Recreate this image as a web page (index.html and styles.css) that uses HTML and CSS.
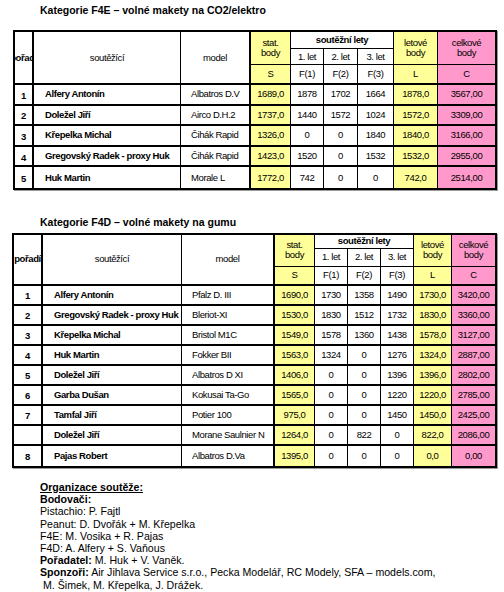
FILE: index.html
```html
<!DOCTYPE html>
<html lang="cs">
<head>
  <meta charset="UTF-8">
  <title>Výsledky – F4E a F4D</title>
  <link rel="stylesheet" href="styles.css">
</head>
<body>
  <!-- F4E -->
  <h1 class="title">Kategorie F4E – volné makety na CO2/elektro</h1>
  <table class="results f4e">
    <colgroup>
      <col style="width:19px"><col style="width:147px"><col style="width:70px">
      <col style="width:40px"><col style="width:33px"><col style="width:34px"><col style="width:36px">
      <col style="width:44px"><col style="width:57px">
    </colgroup>
    <thead>
      <tr class="ha">
        <th rowspan="3" class="rank"><div class="clip"><span>pořadí</span></div></th>
        <th rowspan="3" class="name-h">soutěžící</th>
        <th rowspan="3" class="model-h">model</th>
        <th rowspan="2" class="yellow">stat.<br>body</th>
        <th colspan="3" class="group">soutěžní lety</th>
        <th rowspan="2" class="yellow">letové<br>body</th>
        <th rowspan="2" class="pink last">celkové<br>body</th>
      </tr>
      <tr class="hb">
        <th>1. let</th><th>2. let</th><th>3. let</th>
      </tr>
      <tr class="hc">
        <th class="yellow nt">S</th><th>F(1)</th><th>F(2)</th><th>F(3)</th>
        <th class="yellow nt">L</th><th class="pink nt last">C</th>
      </tr>
    </thead>
    <tbody>
      <tr><td class="rank">1</td><td class="name">Alfery Antonín</td><td class="model">Albatros D.V</td><td class="yellow">1689,0</td><td>1878</td><td>1702</td><td>1664</td><td class="yellow">1878,0</td><td class="pink last">3567,00</td></tr>
      <tr><td class="rank">2</td><td class="name">Doležel Jiří</td><td class="model">Airco D.H.2</td><td class="yellow">1737,0</td><td>1440</td><td>1572</td><td>1024</td><td class="yellow">1572,0</td><td class="pink last">3309,00</td></tr>
      <tr><td class="rank">3</td><td class="name">Křepelka Michal</td><td class="model">Čihák Rapid</td><td class="yellow">1326,0</td><td>0</td><td>0</td><td>1840</td><td class="yellow">1840,0</td><td class="pink last">3166,00</td></tr>
      <tr><td class="rank">4</td><td class="name">Gregovský Radek - proxy Huk</td><td class="model">Čihák Rapid</td><td class="yellow">1423,0</td><td>1520</td><td>0</td><td>1532</td><td class="yellow">1532,0</td><td class="pink last">2955,00</td></tr>
      <tr><td class="rank">5</td><td class="name">Huk Martin</td><td class="model">Morale L</td><td class="yellow">1772,0</td><td>742</td><td>0</td><td>0</td><td class="yellow">742,0</td><td class="pink last">2514,00</td></tr>
    </tbody>
  </table>

  <!-- F4D -->
  <h1 class="title second">Kategorie F4D – volné makety na gumu</h1>
  <table class="results f4d">
    <colgroup>
      <col style="width:29px"><col style="width:139px"><col style="width:93px">
      <col style="width:40px"><col style="width:33px"><col style="width:33px"><col style="width:33px">
      <col style="width:38px"><col style="width:43px">
    </colgroup>
    <thead>
      <tr class="ha">
        <th rowspan="3" class="rank bold">pořadí</th>
        <th rowspan="3" class="name-h">soutěžící</th>
        <th rowspan="3" class="model-h">model</th>
        <th rowspan="2" class="yellow">stat.<br>body</th>
        <th colspan="3" class="group">soutěžní lety</th>
        <th rowspan="2" class="yellow">letové<br>body</th>
        <th rowspan="2" class="pink last">celkové<br>body</th>
      </tr>
      <tr class="hb">
        <th>1. let</th><th>2. let</th><th>3. let</th>
      </tr>
      <tr class="hc">
        <th class="yellow nt">S</th><th>F(1)</th><th>F(2)</th><th>F(3)</th>
        <th class="yellow nt">L</th><th class="pink nt last">C</th>
      </tr>
    </thead>
    <tbody>
      <tr><td class="rank">1</td><td class="name">Alfery Antonín</td><td class="model">Pfalz D. III</td><td class="yellow">1690,0</td><td>1730</td><td>1358</td><td>1490</td><td class="yellow">1730,0</td><td class="pink last">3420,00</td></tr>
      <tr><td class="rank">2</td><td class="name">Gregovský Radek - proxy Huk</td><td class="model">Bleriot-XI</td><td class="yellow">1530,0</td><td>1830</td><td>1512</td><td>1732</td><td class="yellow">1830,0</td><td class="pink last">3360,00</td></tr>
      <tr><td class="rank">3</td><td class="name">Křepelka Michal</td><td class="model">Bristol M1C</td><td class="yellow">1549,0</td><td>1578</td><td>1360</td><td>1438</td><td class="yellow">1578,0</td><td class="pink last">3127,00</td></tr>
      <tr><td class="rank">4</td><td class="name">Huk Martin</td><td class="model">Fokker BII</td><td class="yellow">1563,0</td><td>1324</td><td>0</td><td>1276</td><td class="yellow">1324,0</td><td class="pink last">2887,00</td></tr>
      <tr><td class="rank">5</td><td class="name">Doležel Jiří</td><td class="model">Albatros D XI</td><td class="yellow">1406,0</td><td>0</td><td>0</td><td>1396</td><td class="yellow">1396,0</td><td class="pink last">2802,00</td></tr>
      <tr><td class="rank">6</td><td class="name">Garba Dušan</td><td class="model">Kokusai Ta-Go</td><td class="yellow">1565,0</td><td>0</td><td>0</td><td>1220</td><td class="yellow">1220,0</td><td class="pink last">2785,00</td></tr>
      <tr><td class="rank">7</td><td class="name">Tamfal Jiří</td><td class="model">Potier 100</td><td class="yellow">975,0</td><td>0</td><td>0</td><td>1450</td><td class="yellow">1450,0</td><td class="pink last">2425,00</td></tr>
      <tr><td class="rank"></td><td class="name">Doležel Jiří</td><td class="model">Morane Saulnier N</td><td class="yellow">1264,0</td><td>0</td><td>822</td><td>0</td><td class="yellow">822,0</td><td class="pink last">2086,00</td></tr>
      <tr><td class="rank">8</td><td class="name">Pajas Robert</td><td class="model">Albatros D.Va</td><td class="yellow">1395,0</td><td>0</td><td>0</td><td>0</td><td class="yellow">0,0</td><td class="pink last">0,00</td></tr>
    </tbody>
  </table>

  <!-- Organizace -->
  <div class="org">
    <p class="b u">Organizace soutěže: </p>
    <p class="b">Bodovači:</p>
    <p>Pistachio: P. Fajtl</p>
    <p>Peanut: D. Dvořák + M. Křepelka</p>
    <p>F4E: M. Vosika + R. Pajas</p>
    <p>F4D: A. Alfery + S. Vaňous</p>
    <p><b>Pořadatel:</b> M. Huk + V. Vaněk.</p>
    <p><b>Sponzoři:</b> Air Jihlava Service s.r.o., Pecka Modelář, RC Modely, SFA – models.com,</p>
    <p class="indent">M. Šimek, M. Křepelka, J. Drážek.</p>
  </div>
</body>
</html>
```

FILE: styles.css
```css
/* ZÁKLAD */
* {
  margin: 0;
  padding: 0;
  box-sizing: border-box;
}
body {
  background: #fff;
  color: #000;
  font-family: "Liberation Sans", Arial, sans-serif;
  padding-top: 3px;
}

/* Nadpisy kategorií */
.title {
  font-size: 10.5px;
  font-weight: bold;
  line-height: 14px;
  margin-left: 40px;
}
.title.second {
  margin-top: 25px;
}

/* Tabulky výsledků */
.results {
  table-layout: fixed;
  border-collapse: separate;
  border-spacing: 0;
  border: 2px solid #000;
  box-shadow: 1px 1px 0 #999;
  font-size: 9.5px;
  letter-spacing: -0.4px;
}
.f4e {
  width: 480px;
  margin-left: 13px;
  margin-top: 13px;
}
.f4d {
  width: 481px;
  margin-left: 12px;
  margin-top: 4px;
}

.results th,
.results td {
  border-right: 1px solid #000;
  border-bottom: 1px solid #000;
  text-align: center;
  vertical-align: middle;
  line-height: 10px;
  font-weight: normal;
  overflow: hidden;
  white-space: nowrap;
}
.results .last {
  border-right: none;
}
.results tbody tr:last-child td {
  border-bottom: none;
}

/* Hlavička */
.results .hc th,
.results thead .rank,
.results .name-h,
.results .model-h {
  border-bottom: 2px solid #000;
}
.results .nt {
  border-top: none;
}
.results .group,
.results .bold {
  font-weight: bold;
}
.results .rank {
  border-right: 2px solid #000;
}
.results .model-h,
.results td.model {
  border-right: 2px solid #000;
}

.f4e .ha { height: 17px; }
.f4e .hb { height: 16px; }
.f4e .hc { height: 20px; }
.f4e tbody tr { height: 20.6px; }

.f4d .ha { height: 14px; }
.f4d .hb { height: 18px; }
.f4d .hc { height: 19px; }
.f4d tbody tr { height: 20px; }

.results tbody td {
  border-bottom: 2px solid #000;
}

/* Oříznutý text pořadí v úzkém sloupci */
.clip {
  display: flex;
  justify-content: center;
  overflow: hidden;
  font-weight: bold;
}
.clip span {
  flex: none;
}

/* Buňky */
.results td.rank {
  font-weight: bold;
  padding-top: 3px;
}
.results td.name {
  text-align: left;
  font-weight: bold;
  padding-left: 11px;
}
.results td.model {
  text-align: left;
  padding-left: 10px;
}

.yellow {
  background: #ffff99;
}
.pink {
  background: #ff99cc;
}

/* Organizace soutěže */
.org {
  margin: 13px 0 0 40px;
  font-size: 10.6px;
  line-height: 12.2px;
}
.org .b {
  font-weight: bold;
}
.org .u {
  text-decoration: underline;
}
.org .indent {
  padding-left: 3px;
}
```
